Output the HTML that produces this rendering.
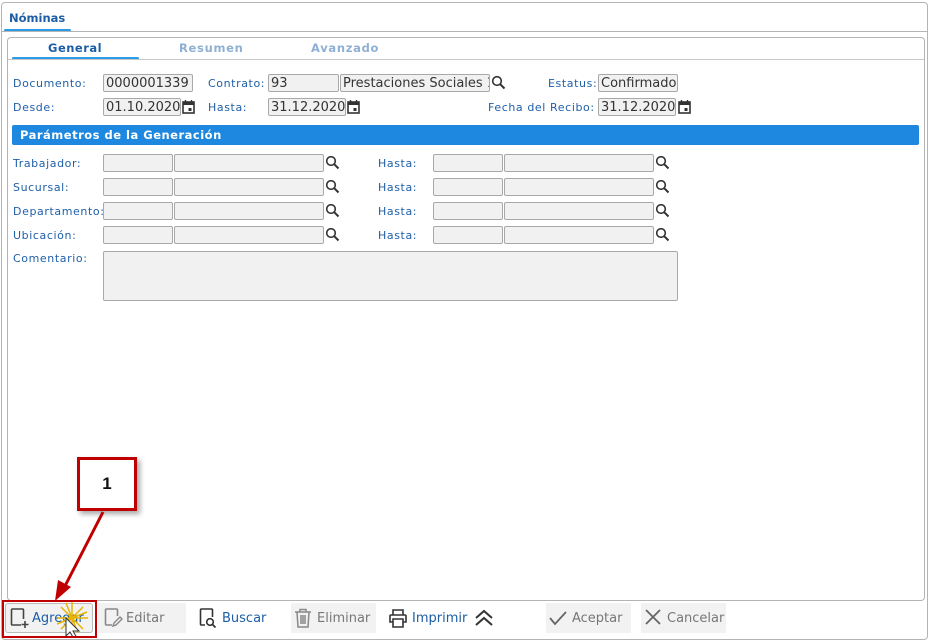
<!DOCTYPE html>
<html><head><meta charset="utf-8"><style>
*{box-sizing:border-box;margin:0;padding:0}
body{width:930px;height:642px;background:#fff;position:relative;overflow:hidden;font-family:"DejaVu Sans","Liberation Sans",sans-serif}
.a{position:absolute}
.lbl{position:absolute;font-size:11px;color:#1f5fa8;letter-spacing:0.6px;white-space:nowrap;margin-top:1px}
.inp{position:absolute;height:18px;background:#f1f1f1;border:1px solid #a9a9a9;border-radius:2px;font-size:13px;color:#333;line-height:17px;padding-left:2px;white-space:nowrap;overflow:hidden}
.btn{position:absolute;top:603px;height:30px;font-size:13px;line-height:31px;white-space:nowrap}
.g{background:#f2f2f2;color:#777}
.b{color:#1c5ea6}
</style></head><body>
<div class="a" style="left:1px;top:2px;width:927px;height:638px;border:1px solid #b4b4b4;border-radius:4px"></div>
<div class="a" style="left:9px;top:11px;font-size:11.5px;font-weight:bold;color:#1c5ea6">Nóminas</div>
<div class="a" style="left:4px;top:29px;width:67px;height:3px;background:#2a9be4;border-radius:2px"></div>
<div class="a" style="left:2px;top:31px;width:926px;height:1px;background:#b4b4b4"></div>
<div class="a" style="left:7px;top:37px;width:918px;height:564px;border:1px solid #b4b4b4;border-radius:4px"></div>
<div class="a" style="left:48px;top:41px;font-size:11.5px;font-weight:bold;color:#1c5ea6;letter-spacing:0.5px">General</div>
<div class="a" style="left:179px;top:41px;font-size:11.5px;font-weight:bold;color:#8fb0d3;letter-spacing:0.7px">Resumen</div>
<div class="a" style="left:311px;top:41px;font-size:11.5px;font-weight:bold;color:#8fb0d3;letter-spacing:0.7px">Avanzado</div>
<div class="a" style="left:12px;top:57px;width:127px;height:3px;background:#2a9be4;border-radius:2px"></div>
<div class="a" style="left:8px;top:59px;width:916px;height:1px;background:#c8c8c8"></div>

<div class="lbl" style="left:13px;top:76px">Documento:</div>
<div class="inp" style="left:103px;top:74px;width:90px">0000001339</div>
<div class="lbl" style="left:208px;top:76px">Contrato:</div>
<div class="inp" style="left:268px;top:74px;width:71px">93</div>
<div class="inp" style="left:340px;top:74px;width:150px">Prestaciones Sociales 1</div>
<svg class="a" style="left:491px;top:75px" width="15" height="15" viewBox="0 0 15 15"><circle cx="6" cy="6" r="4.3" fill="none" stroke="#333" stroke-width="1.6"/><path d="M9.2 9.2L13.5 13.5" stroke="#333" stroke-width="2"/></svg>
<div class="lbl" style="left:548px;top:76px">Estatus:</div>
<div class="inp" style="left:598px;top:74px;width:80px">Confirmado</div>

<div class="lbl" style="left:13px;top:100px">Desde:</div>
<div class="inp" style="left:103px;top:98px;width:78px">01.10.2020</div>
<div class="lbl" style="left:208px;top:100px">Hasta:</div>
<div class="inp" style="left:268px;top:98px;width:78px">31.12.2020</div>
<div class="lbl" style="left:488px;top:100px">Fecha del Recibo:</div>
<div class="inp" style="left:598px;top:98px;width:78px">31.12.2020</div>

<div class="a" style="left:12px;top:125px;width:907px;height:20px;background:#1e88e0;border-radius:2px;color:#fff;font-size:11.5px;font-weight:bold;line-height:21px;padding-left:8px;letter-spacing:0.5px">Parámetros de la Generación</div>

<div class="lbl" style="left:13px;top:156px">Trabajador:</div>
<div class="lbl" style="left:13px;top:180px">Sucursal:</div>
<div class="lbl" style="left:13px;top:204px">Departamento:</div>
<div class="lbl" style="left:13px;top:228px">Ubicación:</div>
<div class="lbl" style="left:13px;top:251px">Comentario:</div>
<div class="lbl" style="left:378px;top:156px">Hasta:</div>
<div class="lbl" style="left:378px;top:180px">Hasta:</div>
<div class="lbl" style="left:378px;top:204px">Hasta:</div>
<div class="lbl" style="left:378px;top:228px">Hasta:</div>

<div id="rows"></div>
<div class="inp" style="left:103px;top:251px;width:575px;height:50px"></div>

<div class="a" style="left:77px;top:457px;width:60px;height:54px;border:3px solid #c00000;background:#fff;box-shadow:3px 3px 5px rgba(0,0,0,0.35);text-align:center;font:bold 17px 'Liberation Sans',sans-serif;line-height:48px;color:#111">1</div>
<svg class="a" style="left:0;top:0" width="930" height="642"><line x1="103" y1="512" x2="64" y2="588" stroke="#c00000" stroke-width="3"/><polygon points="55,601 58,580 71,587" fill="#c00000"/></svg>

<div class="btn" style="left:5px;width:88px;background:#f2f2f2;border:1px solid #bbb;border-radius:3px"></div>
<svg class="a" style="left:9px;top:607px" width="20" height="22" viewBox="0 0 20 22"><path d="M12 18H3.5a1 1 0 0 1-1-1V3a1 1 0 0 1 1-1h10a1 1 0 0 1 1 1v9" fill="none" stroke="#444" stroke-width="1.6"/><path d="M16 14v7M12.5 17.5h7" stroke="#444" stroke-width="1.6"/></svg>
<div class="btn b" style="left:32px">Agregar</div>
<svg class="a" style="left:52px;top:598px" width="40" height="40" viewBox="0 0 40 40"><g stroke="#e8b400" stroke-width="1.5"><path d="M20 4L20 36M6 20L36 20M9 9L31 31M31 9L9 31M14 5L26 35M5 26L35 14"/></g><path d="M14 20l0 18 4-4 4 7 3-1-4-7 6 0z" fill="#fff" stroke="#333" stroke-width="1"/></svg>
<div class="a" style="left:2px;top:600px;width:95px;height:38px;border:2px solid #c00000"></div>

<div class="btn g" style="left:98px;width:88px;padding-left:28px">Editar</div>
<svg class="a" style="left:103px;top:607px" width="20" height="22" viewBox="0 0 20 22"><path d="M9 18H3.5a1 1 0 0 1-1-1V3a1 1 0 0 1 1-1h10a1 1 0 0 1 1 1v6" fill="none" stroke="#888" stroke-width="1.6"/><path d="M10 19l1-3 6-6 2 2-6 6z" fill="none" stroke="#888" stroke-width="1.4"/></svg>
<div class="btn b" style="left:222px">Buscar</div>
<svg class="a" style="left:198px;top:607px" width="20" height="22" viewBox="0 0 20 22"><path d="M7 18H3.5a1 1 0 0 1-1-1V3a1 1 0 0 1 1-1h10a1 1 0 0 1 1 1v7" fill="none" stroke="#333" stroke-width="1.6"/><circle cx="12" cy="15" r="3.3" fill="none" stroke="#333" stroke-width="1.6"/><path d="M14.5 17.5l3 3" stroke="#333" stroke-width="1.8"/></svg>
<div class="btn g" style="left:291px;width:85px;padding-left:26px">Eliminar</div>
<svg class="a" style="left:293px;top:607px" width="20" height="22" viewBox="0 0 20 22"><path d="M2 5h16M7 5V2.5h6V5M4 5l1 15h10l1-15M8 8v9M10 8v9M12 8v9" fill="none" stroke="#888" stroke-width="1.5"/></svg>
<svg class="a" style="left:387px;top:607px" width="22" height="22" viewBox="0 0 22 22"><path d="M6 8V3h10v5M6 15H3V9a1 1 0 0 1 1-1h14a1 1 0 0 1 1 1v6h-3M6 12h10v8H6z" fill="none" stroke="#333" stroke-width="1.6"/></svg>
<div class="btn b" style="left:412px">Imprimir</div>
<svg class="a" style="left:474px;top:609px" width="20" height="18" viewBox="0 0 20 18"><path d="M2 9l8-7 8 7M2 16l8-7 8 7" fill="none" stroke="#333" stroke-width="2"/></svg>
<div class="btn g" style="left:546px;width:85px;padding-left:26px">Aceptar</div>
<svg class="a" style="left:548px;top:609px" width="20" height="18" viewBox="0 0 20 18"><path d="M2 9l5 6L18 3" fill="none" stroke="#666" stroke-width="1.8"/></svg>
<div class="btn g" style="left:641px;width:85px;padding-left:26px">Cancelar</div>
<svg class="a" style="left:644px;top:608px" width="18" height="18" viewBox="0 0 18 18"><path d="M2 2l14 14M16 2L2 16" stroke="#666" stroke-width="1.8"/></svg>

<script>
var h='';[154,178,202,226].forEach(function(y){
[[103,70],[174,150],[433,70],[504,150]].forEach(function(p){h+='<div class="inp" style="left:'+p[0]+'px;top:'+y+'px;width:'+p[1]+'px"></div>';});
[325,655].forEach(function(x){h+='<svg class="a" style="left:'+x+'px;top:'+(y+1)+'px" width="15" height="15" viewBox="0 0 15 15"><circle cx="6" cy="6" r="4.3" fill="none" stroke="#333" stroke-width="1.6"/><path d="M9.2 9.2L13.5 13.5" stroke="#333" stroke-width="2"/></svg>';});
});
[[182,99],[347,99],[678,99]].forEach(function(p){h+='<svg class="a" style="left:'+p[0]+'px;top:'+p[1]+'px" width="13" height="16" viewBox="0 0 13 16"><rect x="1" y="3" width="11" height="11" fill="none" stroke="#333" stroke-width="1.6"/><rect x="1" y="3" width="11" height="3" fill="#333"/><path d="M3.5 1v3M9.5 1v3" stroke="#333" stroke-width="1.4"/><rect x="6.5" y="9" width="3" height="3" fill="#333"/></svg>';});
document.getElementById('rows').innerHTML=h;
</script>
</body></html>
